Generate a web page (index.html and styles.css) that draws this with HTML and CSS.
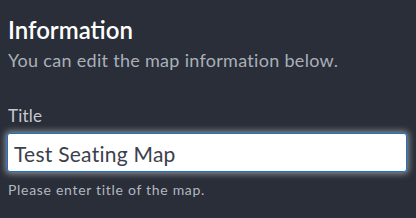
FILE: index.html
```html
<!DOCTYPE html>
<html>
<head>
<meta charset="utf-8">
<link rel="stylesheet" href="styles.css">
</head>
<body>
<div class="panel">
  <h1 class="heading">Information</h1>
  <p class="sub">You can edit the map information below.</p>
  <div class="field">
    <label class="label" for="t">Title</label>
    <input class="input" id="t" type="text" value="Test Seating Map">
    <p class="help">Please enter title of the map.</p>
  </div>
</div>
</body>
</html>
```
FILE: styles.css
```css
html, body {
  margin: 0;
  padding: 0;
  background: #292e38;
}
body {
  font-family: "Lato", "Inter", sans-serif;
  width: 416px;
  height: 218px;
  overflow: hidden;
}
.panel {
  padding: 16px 9px 0 8px;
  display: flex;
  flex-direction: column;
}
.heading {
  margin: 0;
  font-size: 24px;
  font-weight: 600;
  color: #ffffff;
  line-height: 28px;
}
.sub {
  margin: 4px 0 0;
  font-size: 18px;
  color: #aab0b8;
  line-height: 24px;
  letter-spacing: 0.3px;
}
.field {
  margin-top: 33px;
  display: flex;
  flex-direction: column;
}
.label {
  font-size: 17px;
  color: #c5cad1;
  line-height: 22px;
  letter-spacing: 0.2px;
}
.input {
  margin: 6px 0 0 -1px;
  box-sizing: border-box;
  width: 400px;
  height: 39px;
  border: 1px solid #1a72d0;
  border-radius: 3px;
  background: #fff;
  box-shadow: 0 0 6px 2px rgba(255,255,255,0.45);
  padding: 2px 6px 0;
  font-family: inherit;
  font-size: 21px;
  letter-spacing: 0.25px;
  color: #3b404b;
  outline: none;
}
.help {
  margin: 9px 0 0;
  font-size: 14px;
  color: #b2b8c0;
  line-height: 18px;
  letter-spacing: 0.7px;
}
```
